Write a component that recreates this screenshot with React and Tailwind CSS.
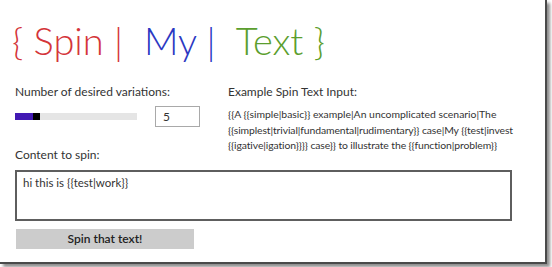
import React from "react";

const App = () => {
  return (
    <div className="w-[552px] h-[267px] bg-white font-['Lato',sans-serif] text-[#333]">
      <div className="w-[547px] h-[264px] bg-white border-r-2 border-b-2 border-[#4a4a4a] shadow-[3px_3px_3px_rgba(0,0,0,0.45)] flex flex-col">
        {/* Title */}
        <div className="flex items-baseline pl-[12px] pt-[16px] text-[38px] font-light leading-[48px] whitespace-nowrap">
          <span className="text-[#d4353a]">{"{ Spin |"}</span>
          <span className="ml-[21px] text-[#2b38c2]">My |</span>
          <span className="ml-[20px] text-[#5b9e2e]">{"Text }"}</span>
        </div>

        {/* Options row */}
        <div className="flex pl-[15px] mt-[20px]">
          <div className="w-[213px] shrink-0 flex flex-col">
            <div className="text-[12px] leading-[16px]">Number of desired variations:</div>
            <div className="flex items-center mt-[6px]">
              <div className="w-[122px] h-[7px] bg-[#e5e5e5] flex">
                <div className="w-[18px] h-full bg-[#4219b3]" />
                <div className="w-[7px] h-full bg-black" />
              </div>
              <div className="ml-[18px] w-[45px] h-[21px] border border-[#a9a9a9] flex items-center pl-[7px] text-[12px]">
                5
              </div>
            </div>
            <div className="mt-[20px] text-[12px] leading-[16px]">Content to spin:</div>
          </div>
          <div className="flex flex-col">
            <div className="text-[12px] leading-[16px]">Example Spin Text Input:</div>
            <div className="mt-[7px] text-[10.4px] leading-[15.5px] whitespace-nowrap">
              <div>{"{{A {{simple|basic}} example|An uncomplicated scenario|The"}</div>
              <div className="tracking-[-0.1px]">{"{{simplest|trivial|fundamental|rudimentary}} case|My {{test|invest"}</div>
              <div className="tracking-[-0.1px]">{"{{igative|igation}}}} case}} to illustrate the {{function|problem}}"}</div>
            </div>
          </div>
        </div>

        {/* Content box */}
        <div className="ml-[15px] mt-[7px] w-[497px] h-[51px] border-2 border-[#5e5e5e] px-[6px] py-[3px] text-[11.5px] leading-[16px]">
          {"hi this is {{test|work}}"}
        </div>

        {/* Button */}
        <button className="ml-[16px] mt-[8px] w-[178px] h-[20px] bg-[#cccccc] text-[12px] font-semibold text-[#222] flex items-center justify-center">
          Spin that text!
        </button>
      </div>
    </div>
  );
};

export default App;
